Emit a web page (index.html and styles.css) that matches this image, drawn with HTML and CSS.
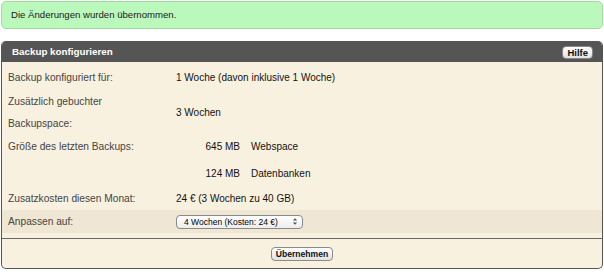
FILE: index.html
```html
<!DOCTYPE html>
<html lang="de">

<head>
    <meta charset="UTF-8">
    <meta name="viewport" content="width=device-width, initial-scale=1.0">
    <title>Backup konfigurieren</title>
    <link rel="stylesheet" href="styles.css">
</head>

<body>
    <!-- Meldung -->
    <div class="notice">Die Änderungen wurden übernommen.</div>

    <!-- Backup Box -->
    <div class="box">
        <div class="box-head">
            <span class="box-title">Backup konfigurieren</span>
            <a class="btn btn-help" href="javascript:;">Hilfe</a>
        </div>

        <div class="box-body">
            <div class="row row-1">
                <div class="label">Backup konfiguriert für:</div>
                <div class="value">1 Woche (davon inklusive 1 Woche)</div>
            </div>
            <div class="row row-2">
                <div class="label">Zusätzlich gebuchter<br>Backupspace:</div>
                <div class="value">3 Wochen</div>
            </div>
            <div class="row row-3">
                <div class="label">Größe des letzten Backups:</div>
                <div class="value sizes">
                    <span class="num">645 MB</span><span>Webspace</span>
                    <span class="num">124 MB</span><span>Datenbanken</span>
                </div>
            </div>
            <div class="row row-4">
                <div class="label">Zusatzkosten diesen Monat:</div>
                <div class="value">24 € (3 Wochen zu 40 GB)</div>
            </div>
            <div class="row row-5">
                <div class="label">Anpassen auf:</div>
                <div class="value">
                    <span class="select">
                        <span>4 Wochen (Kosten: 24 €)</span>
                        <svg width="6" height="9" viewBox="0 0 6 9">
                            <path d="M0.8 3.6 L3 1.2 L5.2 3.6 Z M0.8 5.4 L3 7.8 L5.2 5.4 Z" fill="#555" />
                        </svg>
                    </span>
                </div>
            </div>
        </div>

        <div class="box-foot">
            <a class="btn btn-submit" href="javascript:;">Übernehmen</a>
        </div>
    </div>
</body>

</html>
```

FILE: styles.css
```css
body {
    margin: 0;
    width: 604px;
    font-family: "Liberation Sans", Arial, sans-serif;
    font-size: 10px;
    color: #222;
    background-color: #fff;
}

.notice {
    margin: 1px 1px 0;
    height: 26px;
    line-height: 26px;
    padding-left: 9px;
    font-size: 9.6px;
    background-color: #bbf8bb;
    border: 1px solid #a3d9a3;
    border-radius: 5px;
    color: #1a1a1a;
}

.box {
    margin: 12px 1px 0;
    border: 1px solid #555;
    border-top: 0;
    border-radius: 5px;
    background-color: #f9f1df;
    overflow: hidden;
}

.box-head {
    height: 21px;
    background-color: #555;
    display: flex;
    align-items: center;
    justify-content: space-between;
    padding: 0 9px 0 10px;
}

.box-title {
    color: #fff;
    font-weight: bold;
    font-size: 9.8px;
}

.btn {
    display: inline-block;
    height: 11px;
    line-height: 11px;
    padding: 0 4px;
    color: #111;
    font-weight: bold;
    text-decoration: none;
    background: linear-gradient(#ffffff, #e2e2e2);
    border: 1px solid #8a8a8a;
    border-radius: 4px;
}

.btn-help {
    font-size: 9.5px;
    margin-top: 1px;
}

.btn-submit {
    font-size: 8.6px;
    height: 12px;
    line-height: 12px;
}

.box-body {
    padding-bottom: 5px;
    border-bottom: 1px solid #666;
}

.row {
    display: flex;
    align-items: center;
}

.label {
    width: 168px;
    padding-left: 6px;
    color: #444;
    font-size: 10.2px;
    flex-shrink: 0;
}

.value {
    color: #111;
}

.row-1 {
    height: 30px;
}

.row-2 {
    height: 41px;
}

.row-2 .label {
    line-height: 22px;
}

.row-3 {
    height: 54px;
    align-items: flex-start;
}

.row-3 .label {
    line-height: 27px;
}

.sizes {
    display: grid;
    grid-template-columns: 64px auto;
    column-gap: 11px;
    line-height: 27px;
}

.sizes .num {
    text-align: right;
}

.row-4 {
    height: 23px;
}

.row-5 {
    height: 23px;
    background-color: #efe7d3;
}

.select {
    box-sizing: border-box;
    display: inline-flex;
    align-items: center;
    justify-content: space-between;
    width: 127px;
    height: 14px;
    padding: 0 4px 0 7px;
    font-size: 8.5px;
    white-space: nowrap;
    color: #000;
    background: linear-gradient(#ffffff, #ededed);
    border: 1px solid #8a8a8a;
    border-radius: 4px;
}

.box-foot {
    height: 29px;
    display: flex;
    align-items: center;
    justify-content: center;
}
```
